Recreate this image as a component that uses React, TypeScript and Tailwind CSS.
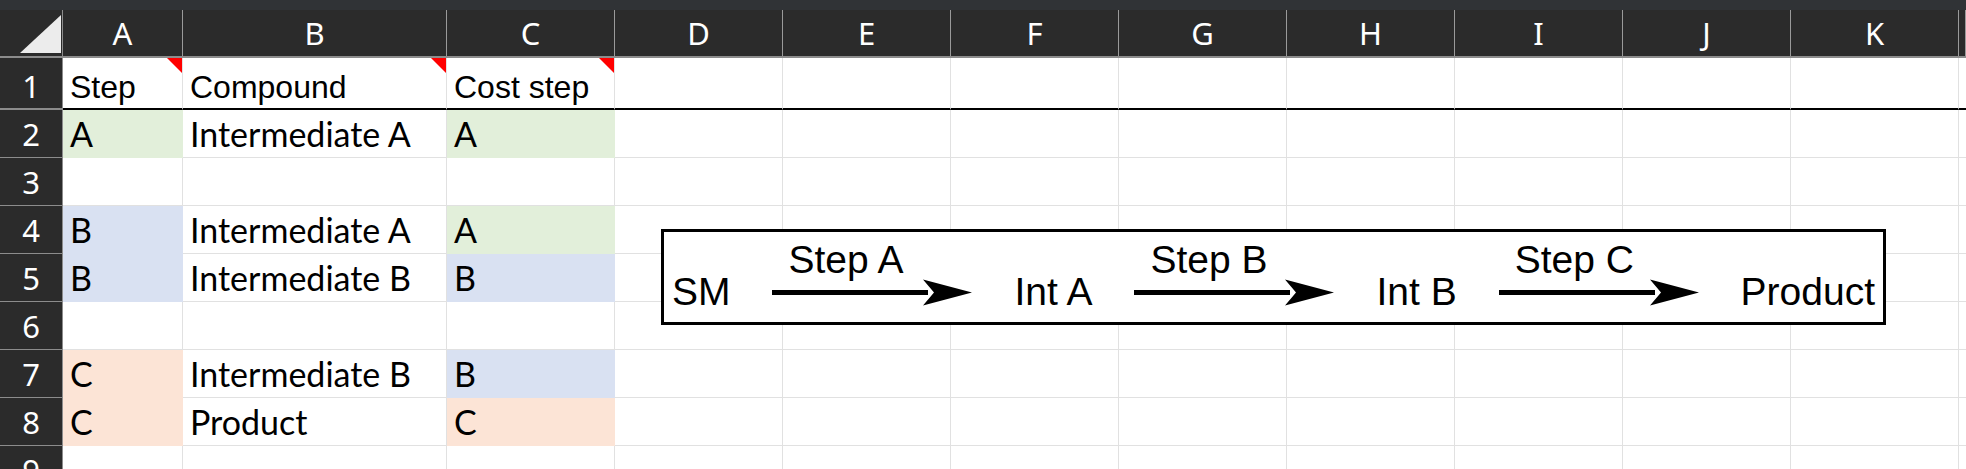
import React from "react";

type Col = { l: string; w: number | null };
const cols: Col[] = [
  { l: "A", w: 120 },
  { l: "B", w: 264 },
  { l: "C", w: 168 },
  { l: "D", w: 168 },
  { l: "E", w: 168 },
  { l: "F", w: 168 },
  { l: "G", w: 168 },
  { l: "H", w: 168 },
  { l: "I", w: 168 },
  { l: "J", w: 168 },
  { l: "K", w: 168 },
  { l: "", w: null },
];

type Fill = "g" | "b" | "p" | undefined;
type CellData = { t?: string; f?: Fill; note?: boolean };

const rows: CellData[][] = [
  [{ t: "Step", note: true }, { t: "Compound", note: true }, { t: "Cost step", note: true }],
  [{ t: "A", f: "g" }, { t: "Intermediate A" }, { t: "A", f: "g" }],
  [{}, {}, {}],
  [{ t: "B", f: "b" }, { t: "Intermediate A" }, { t: "A", f: "g" }],
  [{ t: "B", f: "b" }, { t: "Intermediate B" }, { t: "B", f: "b" }],
  [{}, {}, {}],
  [{ t: "C", f: "p" }, { t: "Intermediate B" }, { t: "B", f: "b" }],
  [{ t: "C", f: "p" }, { t: "Product" }, { t: "C", f: "p" }],
  [{}, {}, {}],
];

const fillCls: Record<string, string> = {
  g: "bg-[#e2efda] border-[#e2efda]",
  b: "bg-[#d9e1f2] border-[#d9e1f2]",
  p: "bg-[#fce4d6] border-[#fce4d6]",
};

function Arrow({ label }: { label: string }) {
  return (
    <div className="flex flex-col w-[200px] pb-[16px]">
      <div className="font-['Liberation_Sans',Arial,sans-serif] text-[39px] leading-none pl-[16px] text-black whitespace-nowrap">
        {label}
      </div>
      <svg width="200" height="27" viewBox="0 0 200 27" className="block">
        <rect x="0" y="11" width="156" height="5" fill="#000" />
        <polygon points="151,0.5 200,13.5 151,26.5 162,13.5" fill="#000" />
      </svg>
    </div>
  );
}

function DiagramText({ children }: { children: React.ReactNode }) {
  return (
    <div className="font-['Liberation_Sans',Arial,sans-serif] text-[39px] leading-none pb-[11px] text-black whitespace-nowrap">
      {children}
    </div>
  );
}

export default function App() {
  return (
    <div className="relative w-[1966px] h-[469px] overflow-hidden bg-white">
      <div className="h-[10px] bg-[#303336]" />
      {/* column header row */}
      <div className="flex h-[48px] bg-[#2b2b2b] border-b-2 border-[#8c8c8c] font-['Noto_Sans',sans-serif] text-white">
        <div className="w-[63px] shrink-0 border-r border-[#8c8c8c] flex items-start">
          <svg width="62" height="46" viewBox="0 0 62 46" className="block">
            <polygon points="20,43 61,43 61,5" fill="#ececec" />
          </svg>
        </div>
        {cols.map((c, i) => (
          <div
            key={i}
            className={`${c.w ? "shrink-0" : "flex-1"} border-r border-[#9a9a9a] flex items-end justify-center pb-[7px] text-[31px] leading-none`}
            style={c.w ? { width: c.w } : undefined}
          >
            {c.l}
          </div>
        ))}
      </div>
      {rows.map((r, ri) => {
        const first = ri === 0;
        return (
          <div key={ri} className={`flex ${first ? "h-[52px]" : "h-[48px]"}`}>
            <div
              className={`w-[63px] shrink-0 bg-[#2b2b2b] border-r border-[#8c8c8c] ${first ? "border-b-2" : "border-b"} border-b-[#8c8c8c] flex items-end justify-center ${first ? "pb-[6px]" : "pb-[7px]"} font-['Noto_Sans',sans-serif] text-[31px] leading-none text-white`}
            >
              {ri + 1}
            </div>
            {cols.map((c, ci) => {
              const d: CellData = r[ci] || {};
              const base = first
                ? "border-r border-r-[#e1e1e1] border-b-2 border-b-black"
                : d.f
                ? `border-r border-b ${fillCls[d.f]}`
                : "border-r border-b border-[#e1e1e1]";
              return (
                <div
                  key={ci}
                  className={`relative ${c.w ? "shrink-0" : "flex-1"} ${base} flex items-end pl-[7px] ${first ? "pb-[5px] font-['Liberation_Sans',Arial,sans-serif] text-[32px]" : "pb-[6px] font-['Lato',sans-serif] text-[34px]"} leading-none text-black whitespace-nowrap overflow-visible`}
                  style={c.w ? { width: c.w } : undefined}
                >
                  {d.t}
                  {d.note && (
                    <div className="absolute top-0 right-0 w-0 h-0 border-t-[15px] border-t-[#ff0000] border-l-[15px] border-l-transparent" />
                  )}
                </div>
              );
            })}
          </div>
        );
      })}

      {/* floating diagram shape */}
      <div className="absolute left-[661px] top-[229px] w-[1225px] h-[96px] border-[3px] border-black bg-white flex items-end justify-between px-[8px]">
        <DiagramText>SM</DiagramText>
        <Arrow label="Step A" />
        <DiagramText>Int A</DiagramText>
        <Arrow label="Step B" />
        <DiagramText>Int B</DiagramText>
        <Arrow label="Step C" />
        <DiagramText>Product</DiagramText>
      </div>
    </div>
  );
}
